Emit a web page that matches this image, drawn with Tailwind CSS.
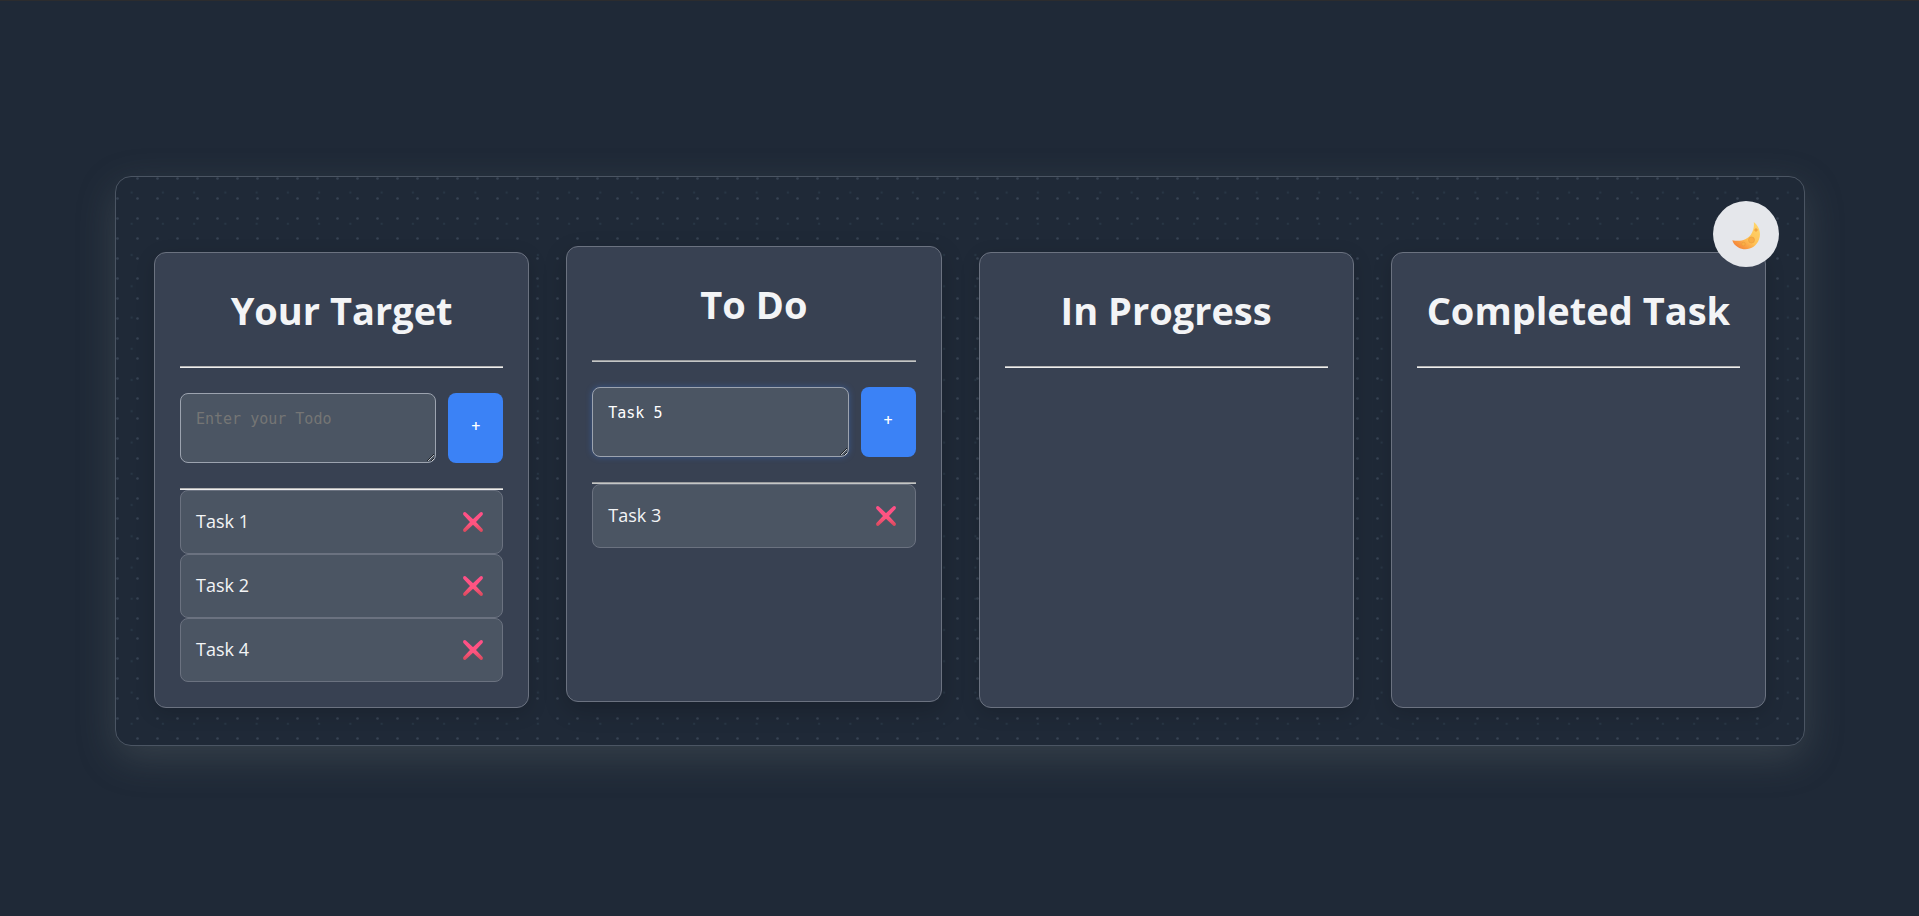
<!DOCTYPE html>
<html lang="en">
<head>
<meta charset="utf-8">
<title>Todo Board</title>
<script src="https://cdn.jsdelivr.net/npm/@tailwindcss/browser@4"></script>
</head>
<body class="min-h-screen bg-[#1f2937] border-t border-[#2c2c2e] flex items-center justify-center pt-1 pl-[115px] pr-[114px] font-['Open_Sans',sans-serif] text-[#f3f4f6]">
<svg class="absolute size-0" aria-hidden="true">
  <defs>
    <linearGradient id="red" x1="0" y1="0" x2="0" y2="1"><stop offset="0" stop-color="#ff4f86"/><stop offset=".6" stop-color="#ff5580"/><stop offset="1" stop-color="#dd4a5e"/></linearGradient>
    <symbol id="cross" viewBox="0 0 20 20"><path d="M2.200 1.200 10 8.400 17.800 1.200Q19.200 0.800 18.800 2.200L11.600 10 18.800 17.800Q19.200 19.200 17.800 18.800L10 11.600 2.200 18.800Q0.800 19.200 1.200 17.800L8.400 10 1.200 2.200Q0.800 0.800 2.200 1.200Z" fill="url(#red)" stroke="url(#red)" stroke-width="2" stroke-linejoin="round"/></symbol>
  </defs>
</svg>
<main class="relative w-full rounded-2xl border border-[#4b5563] bg-[#1f2937] shadow-[0_12px_38px_rgba(110,120,120,0.3)] px-[38px] pt-[75px] pb-[37px]">
  <svg class="absolute inset-0 w-full h-full rounded-2xl" aria-hidden="true">
    <defs>
      <pattern id="dots" width="20" height="20" patternUnits="userSpaceOnUse"><circle cx="1.500" cy="1.500" r="1.300" fill="#364252"/></pattern>
      <pattern id="faint" width="31.250" height="31.250" patternUnits="userSpaceOnUse"><circle cx="15.600" cy="15.600" r="1.100" fill="#283746"/></pattern>
    </defs>
    <rect width="100%" height="100%" fill="url(#faint)"/>
    <rect width="100%" height="100%" fill="url(#dots)"/>
  </svg>
  <div class="relative grid grid-cols-4 gap-[37px]">
    <section class="rounded-xl border border-[#6b7280] bg-[#384152] shadow-[0_5px_19px_rgba(0,0,0,0.15)] p-[25px]">
      <h1 class="h-[88px] pt-1 text-center text-[38px] leading-[56px] font-bold whitespace-nowrap">Your Target</h1>
      <div class="h-[2px] border-t border-[#b4b4b4] bg-[#eeeeee]"></div>
      <form class="flex gap-3 my-[25px] h-[70px]">
        <textarea aria-label="Your target" placeholder="Enter your Todo" class="flex-1 min-w-0 h-full rounded-lg border border-[#9ca3af] bg-[#4b5563] px-[15px] py-[15px] font-['DejaVu_Sans_Mono',monospace] text-[15px] leading-5 text-white placeholder:text-[#757575] outline-none"></textarea>
        <button type="button" class="w-[55px] rounded-lg bg-[#3b82f6] pb-1 text-white text-base font-semibold">+</button>
      </form>
      <div class="h-[2px] border-t border-[#b4b4b4] bg-[#eeeeee]"></div>
      <ul class="text-[18px] font-medium">
        <li class="flex h-16 items-center justify-between rounded-lg border border-[#6b7280] bg-[#4b5563] pl-[15px] pr-[19px]">Task 1<button type="button" aria-label="Delete Task 1"><svg class="size-5 block"><use href="#cross"/></svg></button></li>
        <li class="flex h-16 items-center justify-between rounded-lg border border-[#6b7280] bg-[#4b5563] pl-[15px] pr-[19px]">Task 2<button type="button" aria-label="Delete Task 2"><svg class="size-5 block"><use href="#cross"/></svg></button></li>
        <li class="flex h-16 items-center justify-between rounded-lg border border-[#6b7280] bg-[#4b5563] pl-[15px] pr-[19px]">Task 4<button type="button" aria-label="Delete Task 4"><svg class="size-5 block"><use href="#cross"/></svg></button></li>
      </ul>
    </section>
    <section class="-translate-y-1.5 rounded-xl border border-[#6b7280] bg-[#384152] shadow-[0_8px_23px_rgba(0,0,0,0.18)] p-[25px]">
      <h1 class="h-[88px] pt-1 text-center text-[38px] leading-[56px] font-bold whitespace-nowrap">To Do</h1>
      <div class="h-[2px] border-t border-[#9a9c9e] bg-[#c4c6c6]"></div>
      <form class="flex gap-3 my-[25px] h-[70px]">
        <textarea aria-label="To do" class="flex-1 min-w-0 h-full rounded-lg border border-[#9ca3af] bg-[#4b5563] px-[15px] py-[15px] font-['DejaVu_Sans_Mono',monospace] text-[15px] leading-5 text-white outline-none shadow-[0_0_6px_rgba(59,130,246,0.35)]">Task 5</textarea>
        <button type="button" class="w-[55px] rounded-lg bg-[#3b82f6] pb-1 text-white text-base font-semibold">+</button>
      </form>
      <div class="h-[2px] border-t border-[#9a9c9e] bg-[#c4c6c6]"></div>
      <ul class="text-[18px] font-medium">
        <li class="flex h-16 items-center justify-between rounded-lg border border-[#6b7280] bg-[#4b5563] pl-[15px] pr-[19px]">Task 3<button type="button" aria-label="Delete Task 3"><svg class="size-5 block"><use href="#cross"/></svg></button></li>
      </ul>
    </section>
    <section class="rounded-xl border border-[#6b7280] bg-[#384152] shadow-[0_5px_19px_rgba(0,0,0,0.15)] p-[25px]">
      <h1 class="h-[88px] pt-1 text-center text-[38px] leading-[56px] font-bold whitespace-nowrap">In Progress</h1>
      <div class="h-[2px] border-t border-[#b4b4b4] bg-[#eeeeee]"></div>
    </section>
    <section class="rounded-xl border border-[#6b7280] bg-[#384152] shadow-[0_5px_19px_rgba(0,0,0,0.15)] p-[25px]">
      <h1 class="h-[88px] pt-1 text-center text-[38px] leading-[56px] font-bold whitespace-nowrap">Completed Task</h1>
      <div class="h-[2px] border-t border-[#b4b4b4] bg-[#eeeeee]"></div>
    </section>
  </div>
  <button type="button" aria-label="Toggle theme" class="absolute top-6 right-[25px] flex size-[66px] items-center justify-center rounded-full bg-[#e5e7eb]">
    <svg class="mt-1 size-[30px]" viewBox="0 0 30 30"><defs><linearGradient id="moon" x1=".9" y1=".1" x2=".2" y2="1"><stop offset="0" stop-color="#ffd56b"/><stop offset=".55" stop-color="#ffc155"/><stop offset="1" stop-color="#f47f35"/></linearGradient></defs>
      <path d="M22.800 1C28 5 30.500 12 28 18.500 25 27 15 31 7 26.200 4 24.500 2 22 1.300 19.200 9 21 16 19 20 13.500 22.500 10 23.300 5 22.800 1Z" fill="url(#moon)"/>
      <g fill="#f9ad45" stroke="#e99c3d" stroke-width=".6"><circle cx="20.500" cy="19" r="3"/><circle cx="12.500" cy="23" r="1.800"/><circle cx="25" cy="9" r="1.300"/></g>
    </svg>
  </button>
</main>
</body>
</html>
